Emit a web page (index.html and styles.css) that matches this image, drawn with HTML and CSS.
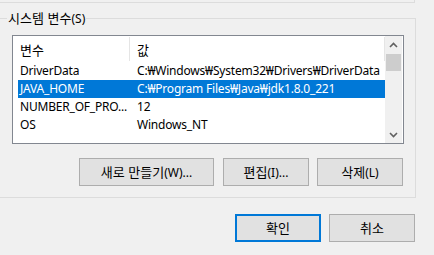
FILE: index.html
```html
<!DOCTYPE html>
<html lang="ko">
<head>
<meta charset="utf-8">
<link rel="stylesheet" href="styles.css">
</head>
<body>
<div class="top-group"></div>
<div class="sys-group">
  <span class="group-label"><span class="ko">시스템 변수</span>(S)</span>
  <div class="lv">
    <div class="lv-main">
      <div class="lv-head">
        <div class="c1 ko">변수</div>
        <div class="sep"></div>
        <div class="c2 ko">값</div>
        <div class="sep sep-end"></div>
      </div>
      <div class="row"><div class="c1">DriverData</div><div class="c2">C:₩Windows₩System32₩Drivers₩DriverData</div></div>
      <div class="row sel"><div class="c1">JAVA_HOME</div><div class="c2">C:₩Program Files₩Java₩jdk1.8.0_221</div></div>
      <div class="row"><div class="c1">NUMBER_OF_PRO...</div><div class="c2">12</div></div>
      <div class="row"><div class="c1">OS</div><div class="c2">Windows_NT</div></div>
    </div>
    <div class="sb">
      <div class="sb-btn"><svg width="9" height="6" viewBox="0 0 9 6"><path d="M1 5 L4.5 1.5 L8 5" fill="none" stroke="#606060" stroke-width="1.6"/></svg></div>
      <div class="sb-thumb"></div>
      <div class="sb-btn sb-down"><svg width="9" height="6" viewBox="0 0 9 6"><path d="M1 1 L4.5 4.5 L8 1" fill="none" stroke="#606060" stroke-width="1.6"/></svg></div>
    </div>
  </div>
  <div class="btn-row">
    <button class="btn btn-wide"><span class="ko">새로 만들기</span>(W)...</button>
    <button class="btn btn-edit"><span class="ko">편집</span>(I)...</button>
    <button class="btn"><span class="ko">삭제</span>(L)</button>
  </div>
</div>
<div class="dlg-row">
  <button class="btn btn-default"><span class="ko">확인</span></button>
  <button class="btn"><span class="ko">취소</span></button>
</div>
</body>
</html>
```
FILE: styles.css
```css
html, body {
  margin: 0;
  padding: 0;
  background: #f0f0f0;
  font-family: "Noto Sans", "Noto Sans CJK KR", sans-serif;
  font-size: 12px;
  color: #000;
  overflow: hidden;
}

.ko {
  font-family: "Noto Sans CJK KR", sans-serif;
  font-size: 13px;
}

.top-group {
  width: 414px;
  height: 2px;
  border-right: 1px solid #dcdcdc;
  border-bottom: 1px solid #dcdcdc;
}

.sys-group {
  position: relative;
  box-sizing: border-box;
  margin-top: 15px;
  margin-left: -10px;
  width: 426px;
  height: 180px;
  border: 1px solid #dcdcdc;
  padding: 16px 0 0 21px;
}

.group-label {
  position: absolute;
  left: 16px;
  top: -8px;
  line-height: 14px;
  padding: 0 1px;
  background: #f0f0f0;
}

.lv {
  box-sizing: border-box;
  width: 392px;
  height: 109px;
  border: 1px solid #828790;
  background: #fff;
  display: flex;
  overflow: hidden;
}

.lv-main {
  width: 372px;
  padding-left: 5px;
  box-sizing: border-box;
  overflow: hidden;
}

.lv-head {
  display: flex;
  height: 26px;
  align-items: center;
}

.lv-head .c1 {
  width: 109px;
  padding-left: 2px;
}

.lv-head .c2 {
  flex: 1;
  padding-left: 7px;
}

.sep {
  width: 1px;
  align-self: stretch;
  margin: 1px 0 1px;
  background: #e5e5e5;
}

.row {
  display: flex;
  height: 18px;
  line-height: 18px;
  white-space: nowrap;
  letter-spacing: -0.2px;
}

.row .c1 {
  width: 110px;
  padding-left: 2px;
  overflow: hidden;
}

.row .c2 {
  flex: 1;
  padding-left: 7px;
  overflow: hidden;
}

.row.sel {
  background: #0078d7;
  color: #fff;
}

.sb {
  width: 17px;
  background: #f0f0f0;
  display: flex;
  flex-direction: column;
}

.sb-btn {
  height: 18px;
  display: flex;
  align-items: center;
  justify-content: center;
}

.sb-down {
  margin-top: auto;
  height: 17px;
}

.sb-thumb {
  height: 17px;
  margin: 0 1px;
  background: #cdcdcd;
}

.btn-row {
  width: 391px;
  margin-top: 14px;
  display: flex;
  justify-content: flex-end;
  gap: 8px;
}

.btn {
  box-sizing: border-box;
  width: 86px;
  height: 28px;
  border: 1px solid #adadad;
  background: #e1e1e1;
  font: inherit;
  color: #000;
  padding: 0;
  line-height: 16px;
}

.btn-wide {
  width: 135px;
}

.btn-edit {
  margin-left: 1px;
}

.btn-default {
  border: 2px solid #0078d7;
}

.dlg-row {
  width: 415px;
  margin-top: 16px;
  display: flex;
  justify-content: flex-end;
  gap: 8px;
}
```
